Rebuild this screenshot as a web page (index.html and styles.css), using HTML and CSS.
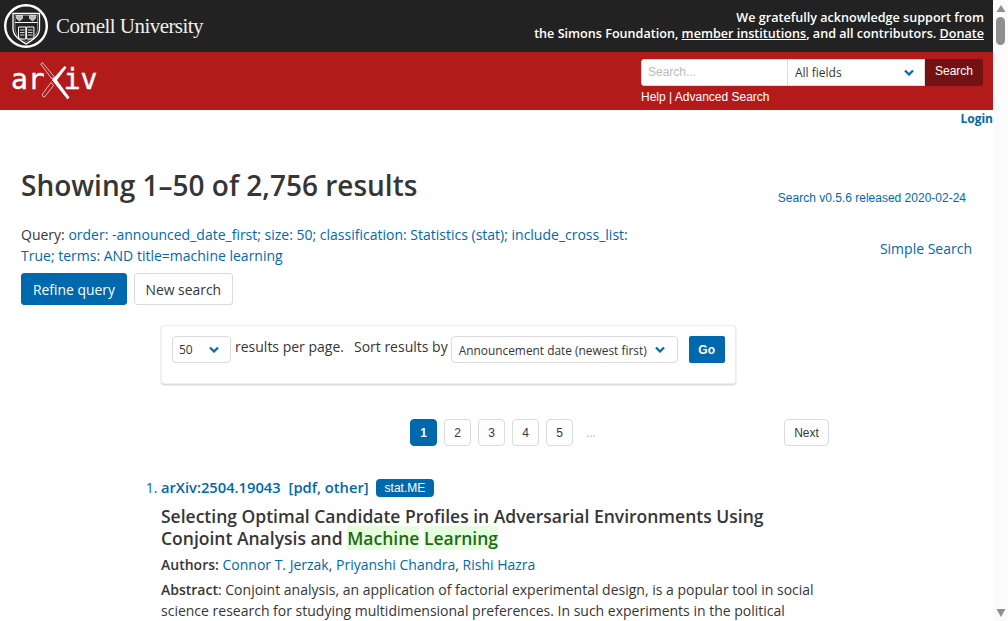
FILE: index.html
```html
<!DOCTYPE html>
<html lang="en">
<head>
<meta charset="utf-8">
<title>Search | arXiv e-print repository</title>
<link rel="stylesheet" href="styles.css">
</head>
<body>
<div class="page">
<header class="cu-bar">
  <a class="cu-logo" href="#">
    <svg class="seal" width="46" height="46" viewBox="0 0 46 46" fill="none" stroke="#fff">
      <circle cx="23" cy="23" r="20.800" stroke-width="2.400"/>
      <path d="M10 10.500H36.500V26C36.500 33 29 37.500 23.200 41C17.500 37.500 10 33 10 26Z" stroke-width="1.300"/>
      <path d="M12 12.500H34.500V26C34.500 32 28 36 23.200 38.800C18.500 36 12 32 12 26Z" stroke-width=".6" opacity=".7"/>
      <path d="M12 19.500H34.500" stroke-width="1"/>
      <path d="M13.500 12.500H19.500V15.500L16.500 18L13.500 15.500ZM26.500 12.500H32.500V15.500L29.500 18L26.500 15.500Z" fill="#bbb" stroke-width=".6"/>
      <path d="M15.500 24H22.800V36H15.500ZM23.600 24H30.900V36H23.600Z" stroke-width="1"/>
      <path d="M17 27H21.500M17 29.500H21.500M17 32H21.500M25 27H29.500M25 29.500H29.500M25 32H29.500" stroke-width=".8"/>
    </svg>
    <span class="cu-name">Cornell University</span>
  </a>
  <div class="support">
    <div>We gratefully acknowledge support from</div>
    <div>the Simons Foundation, <a href="#">member institutions</a>, and all contributors. <a href="#">Donate</a></div>
  </div>
</header>
<div class="red-bar">
  <a class="arxiv" href="#">
    <span class="ar-text">ar</span><svg class="ar-x" width="30" height="38" viewBox="0 0 30 38" fill="none">
      <path d="M.7 2L2.500 .6L14 14.500L12 17Z" stroke="#fff" stroke-width=".7"/>
      <path d="M11 20.500L2.500 32Q2 35 4.500 35L13.500 23.500Z" stroke="#fff" stroke-width=".7"/>
      <path d="M24.500 4L26.500 5.500L15.500 20L12.500 17.500Z" fill="#fff"/>
      <path d="M12 18L15 15.500L29.500 35.500L27.500 37.500Z" fill="#fff"/>
    </svg><span class="ar-text">iv</span>
  </a>
  <form class="search">
    <div class="search-row">
      <input class="s-input" type="text" placeholder="Search...">
      <div class="s-select"><span>All fields</span><svg class="chev" width="10" height="7" viewBox="0 0 10 7"><path d="M1 1.500L5 5.500L9 1.500" fill="none" stroke="#0068ac" stroke-width="2.200"/></svg></div>
      <button class="s-btn" type="button">Search</button>
    </div>
    <div class="s-links"><a href="#">Help</a> | <a href="#">Advanced Search</a></div>
  </form>
</div>
<nav class="login-row"><a href="#">Login</a></nav>
<main class="content">
  <div class="head-row">
    <h1>Showing 1–50 of 2,756 results</h1>
    <a class="version" href="#">Search v0.5.6 released 2020-02-24</a>
  </div>
  <div class="query-row">
    <div class="query">
      <p>Query: <a href="#">order: -announced_date_first; size: 50; classification: Statistics (stat); include_cross_list: True; terms: AND title=machine learning</a></p>
      <div class="q-buttons"><a class="btn primary" href="#">Refine query</a><a class="btn" href="#">New search</a></div>
    </div>
    <a class="simple" href="#">Simple Search</a>
  </div>
  <div class="sort-box">
    <div class="sel sel-num"><span>50</span><svg class="chev" width="10" height="7" viewBox="0 0 10 7"><path d="M1 1.500L5 5.500L9 1.500" fill="none" stroke="#0068ac" stroke-width="2.200"/></svg></div>
    <span class="lbl lbl-a">results per page.</span>
    <span class="lbl lbl-b">Sort results by</span>
    <div class="sel sel-sort"><span>Announcement date (newest first)</span><svg class="chev" width="10" height="7" viewBox="0 0 10 7"><path d="M1 1.500L5 5.500L9 1.500" fill="none" stroke="#0068ac" stroke-width="2.200"/></svg></div>
    <button class="go" type="button">Go</button>
  </div>
  <nav class="pager">
    <a class="pg current" href="#">1</a><a class="pg" href="#">2</a><a class="pg" href="#">3</a><a class="pg" href="#">4</a><a class="pg" href="#">5</a><span class="dots">…</span>
    <a class="pg next" href="#">Next</a>
  </nav>
  <ol class="results">
    <li>
      <div class="r-id"><a href="#">arXiv:2504.19043</a><span class="r-links">[<a href="#">pdf</a>, <a href="#">other</a>]</span><span class="tag">stat.ME</span></div>
      <h2>Selecting Optimal Candidate Profiles in Adversarial Environments Using Conjoint Analysis and <span class="hl">Machine</span> <span class="hl">Learning</span></h2>
      <p class="authors"><b>Authors:</b> <a href="#">Connor T. Jerzak</a>, <a href="#">Priyanshi Chandra</a>, <a href="#">Rishi Hazra</a></p>
      <p class="abstract"><b>Abstract</b>: Conjoint analysis, an application of factorial experimental design, is a popular tool in social science research for studying multidimensional preferences. In such experiments in the political</p>
    </li>
  </ol>
</main>
</div>
<aside class="scrollbar" aria-hidden="true">
  <svg class="sb-arrow-up" width="10" height="7" viewBox="0 0 10 7"><path d="M5 0L9.500 7H.5Z" fill="#8f8f8f"/></svg>
  <div class="sb-thumb"></div>
  <svg class="sb-arrow-down" width="10" height="8" viewBox="0 0 10 8"><path d="M5 8L.5 0H9.500Z" fill="#8f8f8f"/></svg>
</aside>
</body>
</html>
```
FILE: styles.css
```css
* { box-sizing: border-box; }
html, body { height: 100%; overflow: hidden; }
body { margin: 0; font-family: "Open Sans", sans-serif; color: #363636; background: #fff; font-size: 14px; }
a { color: #0068ac; text-decoration: none; }
p { margin: 0; }

.page { width: 993px; }

.scrollbar { position: fixed; top: 0; right: 0; width: 15px; height: 100%; background: #fbfbfb; }
.sb-arrow-up { position: absolute; left: 3px; top: 5px; }
.sb-thumb { position: absolute; left: 3px; top: 17px; width: 9px; height: 28px; background: #8f8f8f; border-radius: 5px; }
.sb-arrow-down { position: absolute; left: 3px; top: 609px; }

.cu-bar { height: 52px; background: #222; display: flex; justify-content: space-between; align-items: center; color: #fff; padding: 0 9px 0 3px; }
.cu-logo { display: flex; align-items: center; color: #fff; }
.seal { flex: none; }
.cu-name { font-family: "Liberation Serif", serif; font-size: 21px; margin-left: 7px; letter-spacing: -.55px; color: #eee; padding-top: 1px; }
.support { text-align: right; font-size: 12.600px; font-weight: 600; line-height: 16px; }
.support a { color: #fff; text-decoration: underline; }

.red-bar { height: 58px; background: #b31b1b; display: flex; justify-content: space-between; padding: 0 10px; }
.arxiv { display: flex; align-items: center; color: #fff; height: 58px; padding-left: 1px; }
.ar-text { font-family: "DejaVu Sans Mono", monospace; font-size: 28px; color: #fff; -webkit-text-stroke: .4px #fff; line-height: 1; margin-top: -3px; }
.ar-x { margin: 0 -6px 0 -5px; flex: none; }
.search { width: 342px; padding-top: 7px; font-family: "Liberation Sans", sans-serif; }
.search-row { display: flex; height: 27px; }
.s-input { width: 147px; height: 27px; border: 1px solid #dbdbdb; border-radius: 3px 0 0 3px; font: 12px "Liberation Sans", sans-serif; padding: 0 6px 2px; background: #fff; }
.s-input::placeholder { color: #bbb; }
.s-select { width: 137px; height: 27px; background: #fff; border: 1px solid #dbdbdb; border-left: 0; font: 12px "Open Sans", sans-serif; color: #363636; display: flex; align-items: center; justify-content: space-between; padding: 0 10px 0 7px; }
.s-btn { width: 58px; height: 27px; background: #721212; color: #fff; border: 0; border-radius: 0 3px 3px 0; font: 12px "Liberation Sans", sans-serif; padding: 0 0 3px; }
.s-links { margin-top: 2px; font-size: 12px; line-height: 18px; color: #fff; }
.s-links a { color: #fff; }

.login-row { height: 18px; text-align: right; font-size: 12px; font-weight: 700; line-height: 18px; }

.content { padding: 0 21px; }
.head-row { display: flex; justify-content: space-between; padding-top: 38px; padding-right: 6px; }
h1 { margin: 0; font-size: 28px; font-weight: 600; line-height: 38px; color: #363636; }
.version { font-family: "Liberation Sans", sans-serif; font-size: 12px; line-height: 18px; margin-top: 23px; }
.query-row { display: flex; justify-content: space-between; margin-top: 17px; }
.query { width: 620px; }
.query p { line-height: 21px; font-size: 14px; }
.simple { margin: 14px 0 0; line-height: 21px; font-size: 14px; }
.q-buttons { display: flex; gap: 7px; margin-top: 7px; }
.btn { height: 32px; display: flex; align-items: center; padding: 0 10.500px; border: 1px solid #dbdbdb; border-radius: 3px; color: #363636; font-size: 13.900px; }
.btn.primary { background: #0068ac; border-color: #0068ac; color: #fff; padding: 0 11px; }

.sort-box { width: 575px; height: 59px; margin: 20px 0 0 140px; background: #fff; border: 1px solid #ededed; border-radius: 3px; box-shadow: 0 1px 2px rgba(10,10,10,.2); padding: 10px 10px 0; display: flex; align-items: flex-start; }
.sel { height: 27px; border: 1px solid #dbdbdb; border-radius: 4px; display: flex; align-items: center; justify-content: space-between; font-size: 11.900px; color: #363636; }
.sel-num { width: 59px; padding: 0 11px 0 6px; font-size: 12px; }
.sel-sort { width: 227px; padding: 0 12px 0 7px; }
.lbl { font-size: 14px; line-height: 21px; color: #363636; }
.lbl-a { margin-left: 4px; }
.lbl-b { margin-left: 10px; margin-right: 3px; }
.go { width: 36px; height: 27px; margin-left: 11px; border: 0; border-radius: 2px; background: #0068ac; color: #fff; font: 700 12px "Liberation Sans", sans-serif; padding: 0; }

.pager { display: flex; margin: 35px 0 0 389px; width: 419px; align-items: center; }
.pg { width: 27px; height: 27px; display: flex; align-items: center; justify-content: center; margin-right: 7px; border: 1px solid #dbdbdb; border-radius: 4px; color: #363636; font: 12px "Liberation Sans", sans-serif; }
.pg.current { background: #0068ac; border-color: #0068ac; color: #fff; font-weight: 700; }
.dots { width: 22px; text-align: center; color: #b5b5b5; font-size: 12px; }
.pg.next { width: 45px; margin: 0 0 0 auto; }

.results { list-style: decimal; margin: 31px 0 0; padding: 0 0 0 140px; color: #0068ac; }
.r-id { font-size: 14.700px; line-height: 21px; font-weight: 600; display: flex; align-items: center; }
.r-links { margin-left: 8px; }
.tag { margin-left: 7px; height: 18px; padding: 0 9px; background: #0068ac; color: #fff; border-radius: 4px; font: 12px/18px "Liberation Sans", sans-serif; }
h2 { margin: 7px 0 0; font-size: 17.500px; line-height: 22px; font-weight: 600; color: #363636; width: 660px; }
.hl { background: #e6fde0; color: #1d6b10; }
.authors { margin-top: 5px; color: #363636; line-height: 21px; }
.authors b, .abstract b { font-weight: 600; }
.abstract { margin-top: 4px; color: #363636; line-height: 21px; width: 670px; }
```
